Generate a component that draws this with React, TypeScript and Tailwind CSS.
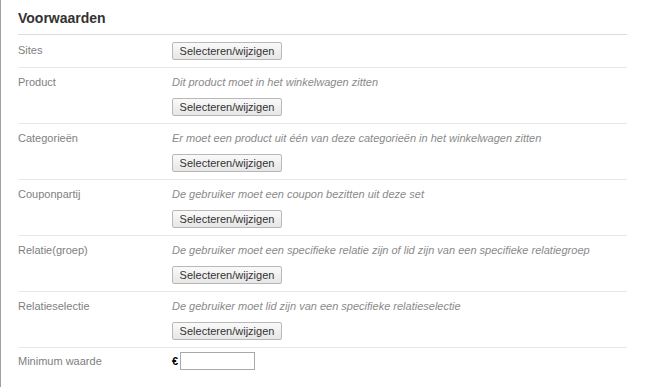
const rows = [
  { label: "Product", desc: "Dit product moet in het winkelwagen zitten" },
  { label: "Categorieën", desc: "Er moet een product uit één van deze categorieën in het winkelwagen zitten" },
  { label: "Couponpartij", desc: "De gebruiker moet een coupon bezitten uit deze set" },
  { label: "Relatie(groep)", desc: "De gebruiker moet een specifieke relatie zijn of lid zijn van een specifieke relatiegroep" },
  { label: "Relatieselectie", desc: "De gebruiker moet lid zijn van een specifieke relatieselectie" },
];

const SelectButton = () => (
  <button
    type="button"
    className="h-[18px] w-[110px] rounded-[2px] border border-[#b8b8b8] bg-gradient-to-b from-[#fafafa] to-[#e6e6e6] text-[11px] leading-[16px] text-[#333]"
  >
    Selecteren/wijzigen
  </button>
);

const App = () => {
  return (
    <div className="min-h-[387px] border-l border-[#a0a0a0] bg-white pl-[17px] pr-[18px] font-['Liberation_Sans',Arial,sans-serif]">
      <h2 className="border-b border-[#dcdcdc] pt-[8px] pb-[6px] text-[14px] font-bold leading-[20px] text-[#333]">
        Voorwaarden
      </h2>

      <div className="flex py-[7px]">
        <div className="w-[154px] pt-[1px] text-[11px] leading-[15px] text-[#808080]">Sites</div>
        <SelectButton />
      </div>

      {rows.map((r) => (
        <div key={r.label} className="flex border-t border-[#e8e8e8] py-[7px]">
          <div className="w-[154px] text-[11px] leading-[15px] text-[#808080]">{r.label}</div>
          <div className="flex flex-col items-start">
            <p className="mb-[8px] text-[11px] italic leading-[15px] text-[#8a8a8a]">{r.desc}</p>
            <SelectButton />
          </div>
        </div>
      ))}

      <div className="flex items-center border-t border-[#e8e8e8] pt-[4px]">
        <div className="w-[154px] text-[11px] leading-[15px] text-[#808080]">Minimum waarde</div>
        <span className="mr-[2px] text-[11px] font-bold text-black">€</span>
        <input type="text" className="h-[18px] w-[75px] border border-[#a9a9a9] bg-white px-1 text-[11px] outline-none" />
      </div>
    </div>
  );
};

export default App;
